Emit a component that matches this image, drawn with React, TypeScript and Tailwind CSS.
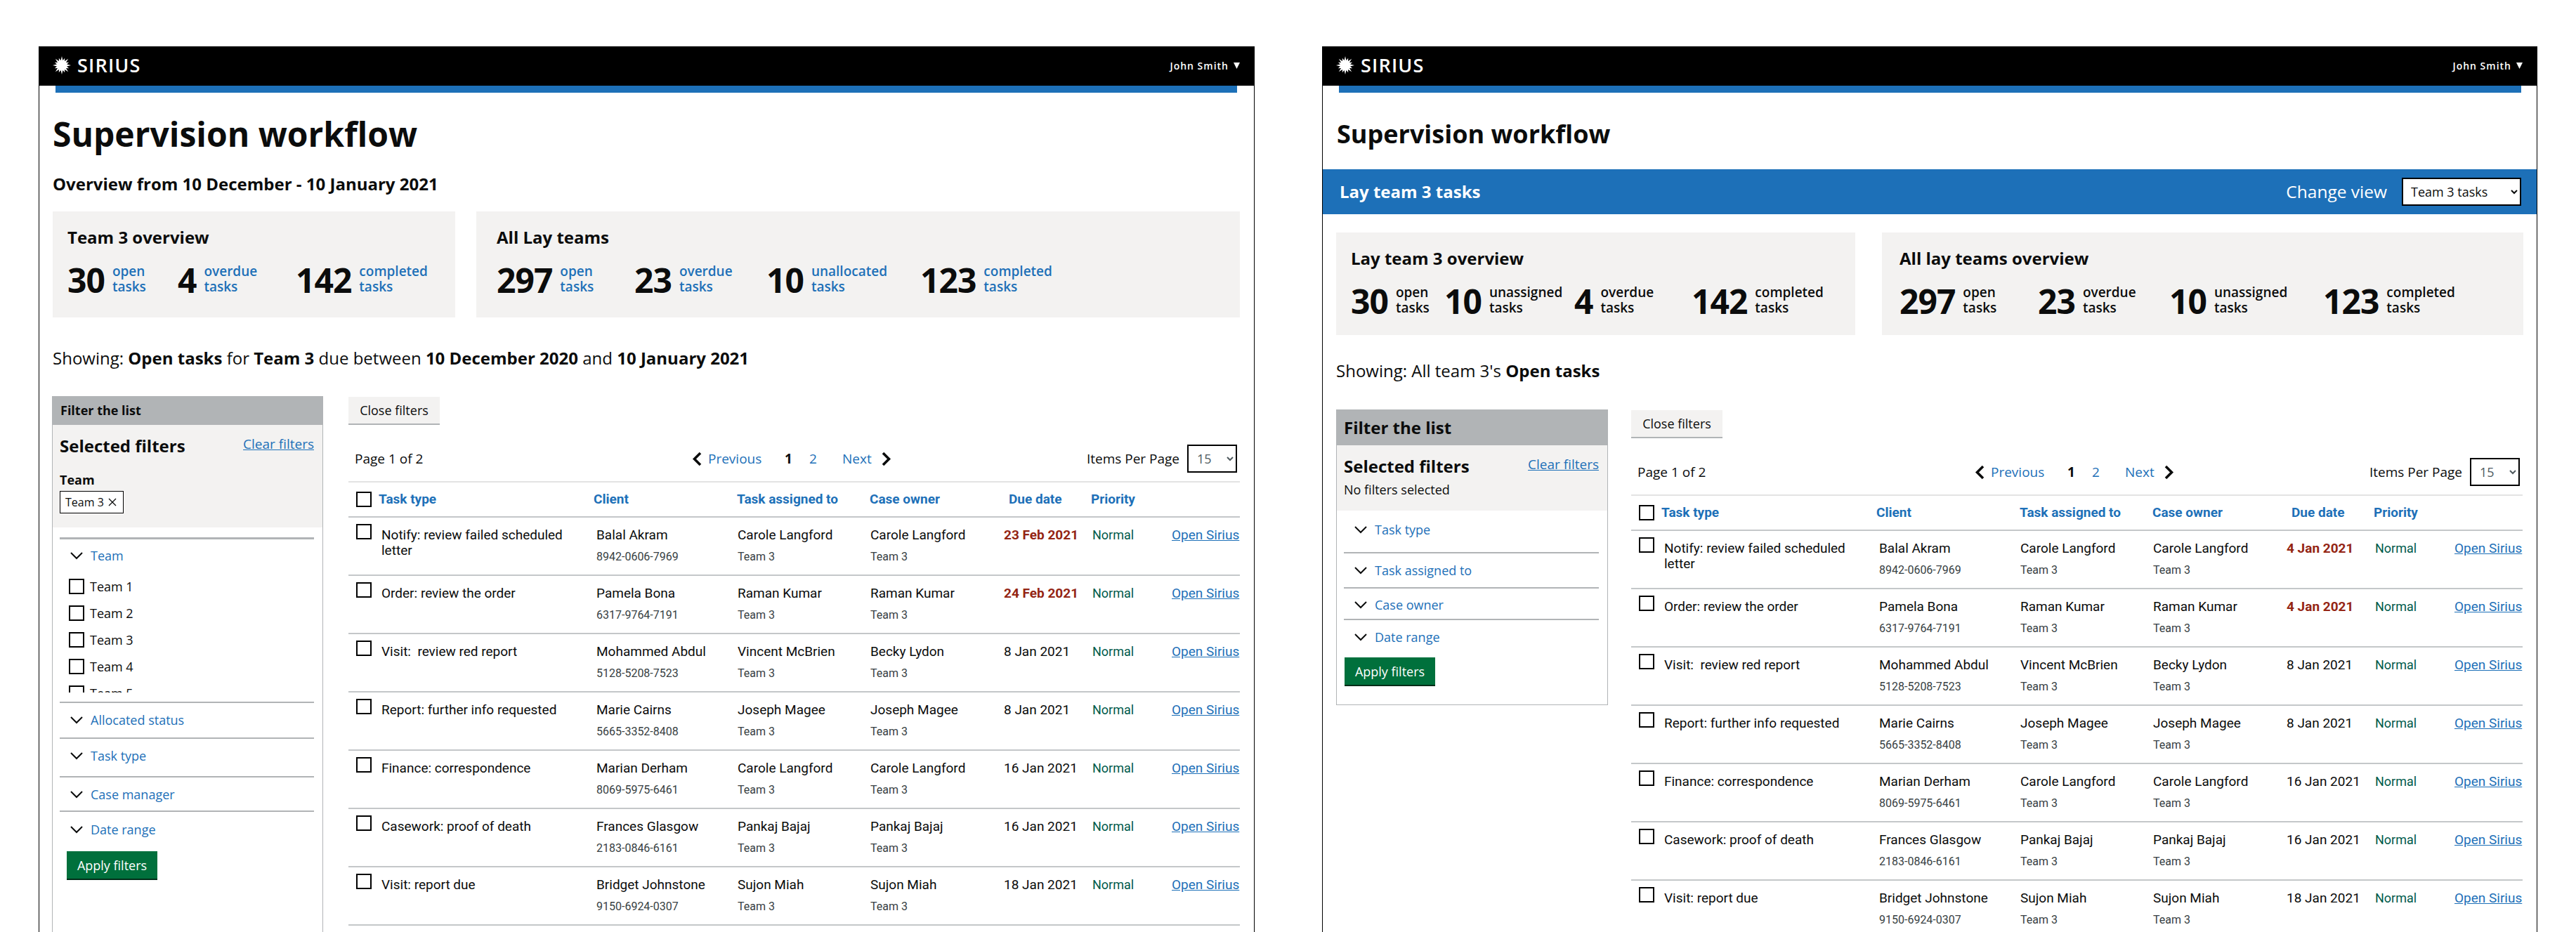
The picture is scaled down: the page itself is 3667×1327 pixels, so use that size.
import React from "react";

const BLUE = "text-[#1d70b8]";

const starPoints = Array.from({ length: 32 }, (_, i) => {
  const angle = (i * Math.PI) / 16 - Math.PI / 2;
  const r = i % 2 === 1 ? 7.2 : i % 4 === 0 ? 13 : 11;
  return `${(13 + r * Math.cos(angle)).toFixed(2)},${(13 + r * Math.sin(angle)).toFixed(2)}`;
}).join(" ");

const Header = () => (
  <div className="h-[56px] bg-black flex items-center justify-between pl-[20px] pr-[21px] pb-[2px] -mx-[1px]">
    <div className="flex items-center gap-[9px]">
      <svg width="26" height="26" viewBox="0 0 26 26">
        <polygon points={starPoints} fill="#fff" />
      </svg>
      <span className="text-white font-semibold text-[27px] leading-[30px] tracking-[1.2px]">SIRIUS</span>
    </div>
    <div className="flex items-center gap-[7px] text-white font-semibold text-[14px] tracking-[1px]">
      <span>John Smith</span>
      <svg width="9" height="10" viewBox="0 0 9 10">
        <path d="M0 1h9L4.5 10z" fill="#fff" />
      </svg>
    </div>
  </div>
);

interface StatProps {
  value: string;
  label: string;
  className: string;
  labelClass: string;
}

const Stat: React.FC<StatProps> = ({ value, label, className, labelClass }) => (
  <div className={`flex gap-[11px] ${className}`}>
    <span className="font-bold text-[48px] leading-[48px] mt-[1px] text-[#0b0c0c] tracking-[-1px]">{value}</span>
    <span className={`font-semibold text-[19px] leading-[22px] mt-[1px] ${labelClass}`}>
      {label}
      <br />
      tasks
    </span>
  </div>
);

const ChevronDown = () => (
  <svg width="18" height="11" viewBox="0 0 18 11" className="shrink-0" fill="none">
    <path d="M1 1l8 8 8-8" stroke="#0b0c0c" strokeWidth="2" />
  </svg>
);

const PageChevron = ({ right }: { right?: boolean }) => (
  <svg width="15" height="21" viewBox="0 0 15 21" fill="none">
    <path d={right ? "M3 2l8.5 8.5L3 19" : "M12 2L3.5 10.5 12 19"} stroke="#0b0c0c" strokeWidth="3.6" />
  </svg>
);

const Box = () => <span className="block w-[22px] h-[22px] shrink-0 border-2 border-black bg-white" />;

const AccordionLabel = ({ label }: { label: string }) => (
  <div className={`flex items-center gap-[11px] pl-[15px] text-[18px] leading-[24px] ${BLUE}`}>
    <ChevronDown />
    <span>{label}</span>
  </div>
);

const ApplyButton = ({ className }: { className: string }) => (
  <button className={`block w-[129px] h-[41px] bg-[#00703c] border-b-2 border-[#002d18] text-white text-[18px] leading-[24px] ${className}`}>
    Apply filters
  </button>
);

const SelectedTitle = () => (
  <div className="flex justify-between items-start">
    <h3 className="font-bold text-[24px] leading-[30px] text-[#0b0c0c]">Selected filters</h3>
    <a className={`text-[19px] leading-[24px] underline ${BLUE}`}>Clear filters</a>
  </div>
);

const LeftFilters = () => (
  <div className="w-[387px] h-full border-x border-[#b1b4b6]">
    <div className="-mx-px h-[41px] bg-[#b1b4b6] flex items-center pl-[12px] font-bold text-[18px] text-[#0b0c0c]">
      Filter the list
    </div>
    <div className="h-[146px] bg-[#f3f2f1] pt-[15px] pl-[10px] pr-[12px]">
      <SelectedTitle />
      <div className="mt-[21px] font-bold text-[18px] leading-[24px] text-[#0b0c0c]">Team</div>
      <div className="mt-[4px] w-[91px] h-[32px] bg-white border border-black flex items-center pl-[7px] gap-[6px] text-[16px] text-[#0b0c0c]">
        <span>Team 3</span>
        <svg width="12" height="12" viewBox="0 0 12 12" fill="none">
          <path d="M1 1l10 10M11 1L1 11" stroke="#0b0c0c" strokeWidth="1.3" />
        </svg>
      </div>
    </div>
    <div className="mx-[10px] mr-[12px] mt-[14px]">
      <div className="h-[234px] border-t-[3px] border-[#b1b4b6] pt-[11px]">
        <AccordionLabel label="Team" />
        <div className="mt-[21px] h-[162px] overflow-hidden pl-[13px] flex flex-col gap-[16px]">
          {["Team 1", "Team 2", "Team 3", "Team 4", "Team 5"].map((t) => (
            <label key={t} className="flex items-center gap-[8px] text-[18px] leading-[22px] text-[#0b0c0c]">
              <Box />
              {t}
            </label>
          ))}
        </div>
      </div>
      <div className="h-[51px] border-t-2 border-[#b1b4b6] pt-[12px]">
        <AccordionLabel label="Allocated status" />
      </div>
      <div className="h-[55px] border-t-2 border-[#b1b4b6] pt-[12px]">
        <AccordionLabel label="Task type" />
      </div>
      <div className="h-[49px] border-t-2 border-[#b1b4b6] pt-[12px]">
        <AccordionLabel label="Case manager" />
      </div>
      <div className="h-[58px] border-t-2 border-[#b1b4b6] pt-[13px]">
        <AccordionLabel label="Date range" />
      </div>
      <ApplyButton className="ml-[10px]" />
    </div>
  </div>
);

const RightFilters = () => (
  <div className="w-[387px] h-[421px] border border-t-0 border-[#b1b4b6]">
    <div className="-mx-px h-[51px] bg-[#b1b4b6] flex items-center pl-[11px] font-bold text-[24px] text-[#0b0c0c]">
      Filter the list
    </div>
    <div className="h-[93px] bg-[#f3f2f1] pt-[15px] pl-[10px] pr-[12px]">
      <SelectedTitle />
      <div className="mt-[6px] text-[18px] leading-[24px] text-[#0b0c0c]">No filters selected</div>
    </div>
    <div className="ml-[10px] mr-[12px]">
      <div className="h-[59px] pt-[15px]">
        <AccordionLabel label="Task type" />
      </div>
      <div className="h-[50px] border-t-2 border-[#b1b4b6] pt-[12px]">
        <AccordionLabel label="Task assigned to" />
      </div>
      <div className="h-[45px] border-t-2 border-[#b1b4b6] pt-[11px]">
        <AccordionLabel label="Case owner" />
      </div>
      <div className="h-[55px] border-t-2 border-[#b1b4b6] pt-[12px]">
        <AccordionLabel label="Date range" />
      </div>
      <ApplyButton className="ml-[1px]" />
    </div>
  </div>
);

interface Row {
  task: string;
  client: string;
  phone: string;
  assigned: string;
  owner: string;
  due: string;
}

const rows: Row[] = [
  { task: "Notify: review failed scheduled letter", client: "Balal Akram", phone: "8942-0606-7969", assigned: "Carole Langford", owner: "Carole Langford", due: "" },
  { task: "Order: review the order", client: "Pamela Bona", phone: "6317-9764-7191", assigned: "Raman Kumar", owner: "Raman Kumar", due: "" },
  { task: "Visit:\u00a0 review red report", client: "Mohammed Abdul", phone: "5128-5208-7523", assigned: "Vincent McBrien", owner: "Becky Lydon", due: "8 Jan 2021" },
  { task: "Report: further info requested", client: "Marie Cairns", phone: "5665-3352-8408", assigned: "Joseph Magee", owner: "Joseph Magee", due: "8 Jan 2021" },
  { task: "Finance: correspondence", client: "Marian Derham", phone: "8069-5975-6461", assigned: "Carole Langford", owner: "Carole Langford", due: "16 Jan 2021" },
  { task: "Casework: proof of death", client: "Frances Glasgow", phone: "2183-0846-6161", assigned: "Pankaj Bajaj", owner: "Pankaj Bajaj", due: "16 Jan 2021" },
  { task: "Visit: report due", client: "Bridget Johnstone", phone: "9150-6924-0307", assigned: "Sujon Miah", owner: "Sujon Miah", due: "18 Jan 2021" },
];

const TaskList = ({ overdue }: { overdue: string[] }) => (
  <div className="w-[1269px] pt-[1px]">
    <button className="block w-[130px] h-[40px] bg-[#f3f2f1] border-b-2 border-[#b1b4b6] text-[18px] text-[#0b0c0c]">
      Close filters
    </button>
    <div className="mt-[28px] h-[40px] flex items-center text-[19px] text-[#0b0c0c]">
      <div className="w-[489px] pl-[9px]">Page 1 of 2</div>
      <PageChevron />
      <a className={`ml-[8px] w-[109px] ${BLUE}`}>Previous</a>
      <b className="w-[35px]">1</b>
      <a className={`w-[47px] ${BLUE}`}>2</a>
      <a className={`w-[55px] ${BLUE}`}>Next</a>
      <PageChevron right />
      <div className="ml-auto flex items-center gap-[11px] pr-[4px]">
        <span>Items Per Page</span>
        <select defaultValue="15" className="w-[71px] h-[40px] border-2 border-black bg-white pl-[8px] text-[18px] text-[#505a5f]">
          <option>15</option>
        </select>
      </div>
    </div>
    <div className="font-['Roboto',sans-serif] mt-[12px]">
      <div className={`h-[52px] border-y-2 border-t-[#e3e3e3] border-b-[#c4c7c9] grid grid-cols-[349px_204px_189px_198px_117px_212px] items-center font-bold text-[19px] ${BLUE}`}>
        <div className="flex items-center gap-[10px] pl-[11px]">
          <Box />
          Task type
        </div>
        <div>Client</div>
        <div>Task assigned to</div>
        <div>Case owner</div>
        <div>Due date</div>
        <div>Priority</div>
      </div>
      {rows.map((r, i) => (
        <div
          key={r.phone}
          className="h-[83px] border-b-2 border-[#c4c7c9] grid grid-cols-[353px_201px_189px_190px_126px_113px_97px] text-[19px] leading-[22px] text-[#0b0c0c]"
        >
          <div className="flex gap-[14px] pl-[11px] pt-[9px]">
            <Box />
            <div className="pt-[5px] w-[280px]">{r.task}</div>
          </div>
          <div className="pt-[14px]">
            {r.client}
            <div className="mt-[10px] text-[16px] leading-[20px] text-[#383f43]">{r.phone}</div>
          </div>
          <div className="pt-[14px]">
            {r.assigned}
            <div className="mt-[10px] text-[16px] leading-[20px] text-[#383f43]">Team 3</div>
          </div>
          <div className="pt-[14px]">
            {r.owner}
            <div className="mt-[10px] text-[16px] leading-[20px] text-[#383f43]">Team 3</div>
          </div>
          <div className={`pt-[14px] ${i < 2 ? "font-bold text-[#942514]" : ""}`}>{i < 2 ? overdue[i] : r.due}</div>
          <div className="pt-[14px] text-[18px] text-[#005a4b]">Normal</div>
          <a className={`pt-[14px] underline ${BLUE}`}>Open Sirius</a>
        </div>
      ))}
    </div>
  </div>
);

const ScreenLeft = () => (
  <div className="w-[1731px] h-[1261px] border-x border-black overflow-hidden">
    <Header />
    <div className="ml-[23px] mr-[24px] h-[10px] bg-[#1d70b8]" />
    <div className="pl-[19px] pr-[20px] text-[#0b0c0c]">
      <h1 className="mt-[27px] font-bold text-[48px] leading-[64px]">Supervision workflow</h1>
      <h2 className="mt-[23px] font-bold text-[24px] leading-[32px]">Overview from 10 December - 10 January 2021</h2>
      <div className="mt-[23px] flex gap-[30px]">
        <div className="w-[573px] h-[151px] bg-[#f3f2f1] pt-[22px] pl-[21px]">
          <h3 className="font-bold text-[24px] leading-[30px]">Team 3 overview</h3>
          <div className="mt-[21px] flex">
            <Stat value="30" label="open" className="w-[157px]" labelClass={BLUE} />
            <Stat value="4" label="overdue" className="w-[168px]" labelClass={BLUE} />
            <Stat value="142" label="completed" className="" labelClass={BLUE} />
          </div>
        </div>
        <div className="w-[1087px] h-[151px] bg-[#f3f2f1] pt-[22px] pl-[29px]">
          <h3 className="font-bold text-[24px] leading-[30px]">All Lay teams</h3>
          <div className="mt-[21px] flex">
            <Stat value="297" label="open" className="w-[196px]" labelClass={BLUE} />
            <Stat value="23" label="overdue" className="w-[188px]" labelClass={BLUE} />
            <Stat value="10" label="unallocated" className="w-[219px]" labelClass={BLUE} />
            <Stat value="123" label="completed" className="" labelClass={BLUE} />
          </div>
        </div>
      </div>
      <p className="mt-[42px] text-[24px] leading-[32px]">
        Showing: <b>Open tasks</b> for <b>Team 3</b> due between <b>10 December 2020</b> and <b>10 January 2021</b>
      </p>
      <div className="mt-[38px] flex gap-[36px] h-[763px] -ml-px">
        <LeftFilters />
        <TaskList overdue={["23 Feb 2021", "24 Feb 2021"]} />
      </div>
    </div>
  </div>
);

const ScreenRight = () => (
  <div className="w-[1730px] h-[1261px] border-x border-black overflow-hidden">
    <Header />
    <div className="ml-[23px] mr-[22px] h-[10px] bg-[#1d70b8]" />
    <div className="text-[#0b0c0c]">
      <h1 className="mt-[35px] pl-[20px] font-bold text-[36px] leading-[48px]">Supervision workflow</h1>
      <div className="mt-[26px] -mx-px h-[64px] bg-[#1d70b8] flex items-center justify-between pl-[25px] pr-[23px] text-white text-[24px]">
        <span className="font-bold">Lay team 3 tasks</span>
        <div className="flex items-center gap-[21px]">
          <span className="text-[24.5px]">Change view</span>
          <select defaultValue="Team 3 tasks" className="w-[170px] h-[40px] border-2 border-black bg-white pl-[7px] text-[18px] text-[#0b0c0c]">
            <option>Team 3 tasks</option>
          </select>
        </div>
      </div>
      <div className="pl-[19px] pr-[18px]">
        <div className="mt-[26px] flex gap-[38px]">
          <div className="w-[739px] h-[146px] bg-[#f3f2f1] pt-[22px] pl-[21px]">
            <h3 className="font-bold text-[24px] leading-[30px]">Lay team 3 overview</h3>
            <div className="mt-[21px] flex">
              <Stat value="30" label="open" className="w-[133px]" labelClass="text-[#0b0c0c]" />
              <Stat value="10" label="unassigned" className="w-[185px]" labelClass="text-[#0b0c0c]" />
              <Stat value="4" label="overdue" className="w-[167px]" labelClass="text-[#0b0c0c]" />
              <Stat value="142" label="completed" className="" labelClass="text-[#0b0c0c]" />
            </div>
          </div>
          <div className="w-[913px] h-[146px] bg-[#f3f2f1] pt-[22px] pl-[25px]">
            <h3 className="font-bold text-[24px] leading-[30px]">All lay teams overview</h3>
            <div className="mt-[21px] flex">
              <Stat value="297" label="open" className="w-[197px]" labelClass="text-[#0b0c0c]" />
              <Stat value="23" label="overdue" className="w-[187px]" labelClass="text-[#0b0c0c]" />
              <Stat value="10" label="unassigned" className="w-[219px]" labelClass="text-[#0b0c0c]" />
              <Stat value="123" label="completed" className="" labelClass="text-[#0b0c0c]" />
            </div>
          </div>
        </div>
        <p className="mt-[35px] text-[24px] leading-[32px]">
          Showing: All team 3's <b>Open tasks</b>
        </p>
        <div className="mt-[39px] flex gap-[33px] items-start">
          <RightFilters />
          <TaskList overdue={["4 Jan 2021", "4 Jan 2021"]} />
        </div>
      </div>
    </div>
  </div>
);

export default function App() {
  return (
    <div className="w-[3667px] h-[1327px] overflow-hidden bg-white pt-[66px] pl-[55px] flex gap-[96px] font-['Open_Sans',sans-serif]">
      <ScreenLeft />
      <ScreenRight />
    </div>
  );
}
